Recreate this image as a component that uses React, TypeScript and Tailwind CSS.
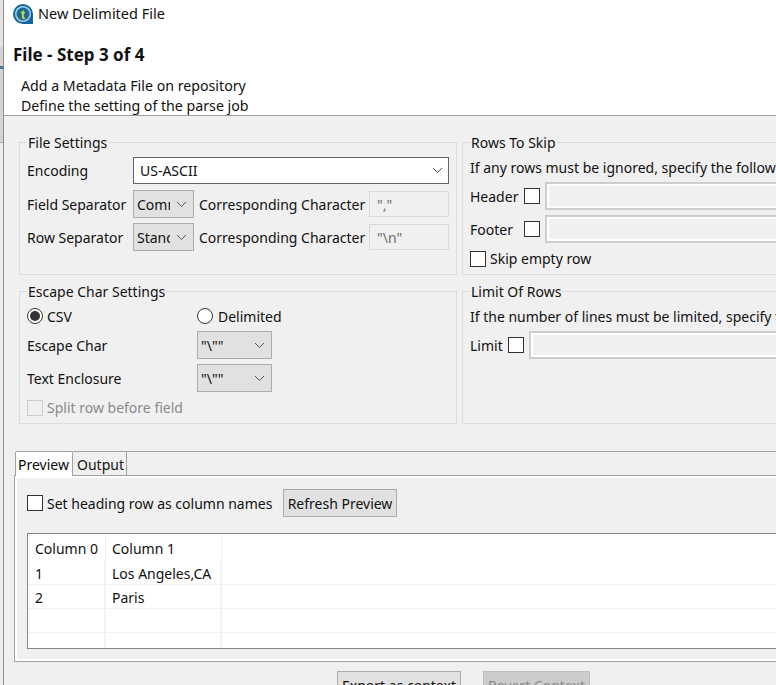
const Chevron = ({ color = "#555" }: { color?: string }) => (
  <svg width="11" height="7" viewBox="0 0 11 7" fill="none" className="shrink-0">
    <path d="M1 1l4.5 4.5L10 1" stroke={color} strokeWidth="1" />
  </svg>
);

const Combo = ({ text, w, textW }: { text: string; w: string; textW: string }) => (
  <div className={`${w} h-[28px] shrink-0 flex items-center bg-[#e1e1e1] border border-[#adadad] pl-[3px]`}>
    <span className={`${textW} overflow-hidden whitespace-nowrap`}>{text}</span>
    <span className="ml-auto mr-[6px] flex"><Chevron /></span>
  </div>
);

const Check = ({ disabled = false }: { disabled?: boolean }) => (
  <span className={`block w-[16px] h-[16px] shrink-0 border ${disabled ? "border-[#cccccc] bg-[#f0f0f0]" : "border-[#333333] bg-white"}`} />
);

const Radio = ({ on = false }: { on?: boolean }) => (
  <span className="flex items-center justify-center w-[16px] h-[16px] shrink-0 rounded-full border border-[#333333] bg-white">
    {on && <span className="block w-[10px] h-[10px] rounded-full bg-[#333333]" />}
  </span>
);

const Group = ({ title, className, children }: { title: string; className: string; children: React.ReactNode }) => (
  <fieldset className={`${className} h-[143px] pl-[7px] border border-[#dcdcdc] shrink-0`}>
    <legend className="px-[1px] h-[20px] pt-[2px] leading-[18px]">{title}</legend>
    {children}
  </fieldset>
);

const ReadBox = ({ text }: { text: string }) => (
  <div className="w-[80px] h-[26px] border border-[#d9d9d9] flex items-center pl-[7px] text-[#6d6d6d] bg-[#f0f0f0]">{text}</div>
);

const WideBox = () => (
  <div className="flex-1 h-[28px] border-2 border-[#cdcdcd]">
    <div className="h-full border-2 border-white bg-[#f0f0f0]" />
  </div>
);

const cols = ["w-[78px]", "w-[116px]"];

export default function App() {
  return (
    <div className="w-[776px] h-[685px] overflow-hidden flex bg-white text-[14px] text-[#111] font-['Noto_Sans',sans-serif]">
      <div className="w-[3px] shrink-0 flex flex-col">
        <div className="h-[46px] bg-[#e4e4e4]" />
        <div className="h-[20px] bg-[#d4d4d4]" />
        <div className="h-[3px] bg-[#3f73a8]" />
        <div className="h-[73px] bg-[#d4d4d4]" />
        <div className="flex-1 bg-[#eeeeee] border-t border-[#aaaaaa]" />
      </div>
      <div className="w-[773px] shrink-0 flex flex-col border-l border-[#8f8f8f]">
        <header className="h-[116px] shrink-0 bg-white border-b border-[#a0a0a0] flex flex-col">
          <div className="flex items-center h-[27px] pl-[9px] pt-[1px] text-[14.5px]">
            <svg width="20" height="20" viewBox="0 0 20 20" className="shrink-0">
              <rect x="9" y="10" width="11" height="10" fill="#14649f" />
              <circle cx="10" cy="10" r="10" fill="#14649f" />
              <circle cx="10" cy="10" r="8" fill="#9fd0e4" />
              <circle cx="10" cy="10" r="6.5" fill="#1a6a93" />
              <text x="10" y="14.5" fontSize="13" fontWeight="700" textAnchor="middle" fill="#d8dc3e" fontFamily="'Liberation Sans',sans-serif">t</text>
            </svg>
            <span className="ml-[5px]">New Delimited File</span>
          </div>
          <div className="mt-[16px] pl-[9px] text-[17px] font-bold leading-[24px]">File - Step 3 of 4</div>
          <div className="mt-[9px] pl-[17px] leading-[20px] text-[14.2px]">Add a Metadata File on repository</div>
          <div className="pl-[17px] h-[18px] leading-[20px] text-[14.2px]">Define the setting of the parse job</div>
        </header>

        <main className="flex-1 bg-[#f0f0f0] flex flex-col pt-[16px] min-h-0">
          <div className="flex shrink-0 pl-[15px] gap-[5px]">
            <Group title="File Settings" className="w-[438px]">
              <div className="flex items-center h-[27px] mt-[5px]">
                <span className="w-[106px]">Encoding</span>
                <div className="w-[316px] h-[27px] bg-white border border-[#666666] flex items-center pl-[6px]">
                  US-ASCII
                  <span className="ml-auto mr-[5px] flex"><Chevron /></span>
                </div>
              </div>
              <div className="flex items-center mt-[6px]">
                <span className="w-[106px] whitespace-nowrap">Field Separator</span>
                <Combo text="Comma" w="w-[61px]" textW="w-[33px]" />
                <span className="ml-[5px] w-[170px] whitespace-nowrap">Corresponding Character</span>
                <ReadBox text={'","'} />
              </div>
              <div className="flex items-center mt-[5px]">
                <span className="w-[106px] whitespace-nowrap">Row Separator</span>
                <Combo text="Standard" w="w-[61px]" textW="w-[33px]" />
                <span className="ml-[5px] w-[170px] whitespace-nowrap">Corresponding Character</span>
                <ReadBox text={'"\\n"'} />
              </div>
            </Group>
            <Group title="Rows To Skip" className="w-[420px]">
              <div className="whitespace-nowrap leading-[20px] mt-[6px]">If any rows must be ignored, specify the following</div>
              <div className="flex items-center mt-[4px]">
                <span className="w-[54px]">Header</span>
                <Check />
                <span className="w-[5px]" />
                <WideBox />
              </div>
              <div className="flex items-center mt-[5px]">
                <span className="w-[54px]">Footer</span>
                <Check />
                <span className="w-[5px]" />
                <WideBox />
              </div>
              <div className="flex items-center gap-[4px] mt-[6px] leading-[20px]">
                <Check />
                <span>Skip empty row</span>
              </div>
            </Group>
          </div>

          <div className="flex shrink-0 pl-[15px] gap-[5px] mt-[6px]">
            <Group title="Escape Char Settings" className="w-[438px]">
              <div className="flex items-center h-[20px] mt-[5px]">
                <div className="w-[170px] flex items-center gap-[4px]"><Radio on /><span>CSV</span></div>
                <div className="flex items-center gap-[5px]"><Radio /><span>Delimited</span></div>
              </div>
              <div className="flex items-center mt-[5px]">
                <span className="w-[170px]">Escape Char</span>
                <Combo text={'"\\""'} w="w-[75px]" textW="w-[40px]" />
              </div>
              <div className="flex items-center mt-[5px]">
                <span className="w-[170px]">Text Enclosure</span>
                <Combo text={'"\\""'} w="w-[75px]" textW="w-[40px]" />
              </div>
              <div className="flex items-center gap-[4px] mt-[5px] text-[#8a8a8a] leading-[20px]">
                <Check disabled />
                <span className="pt-[1px]">Split row before field</span>
              </div>
            </Group>
            <Group title="Limit Of Rows" className="w-[420px]">
              <div className="whitespace-nowrap leading-[20px] mt-[6px]">If the number of lines must be limited, specify the</div>
              <div className="flex items-center mt-[4px]">
                <span className="w-[38px]">Limit</span>
                <Check />
                <span className="w-[5px]" />
                <WideBox />
              </div>
            </Group>
          </div>

          <section className="mt-[27px] ml-[10px] w-[800px] shrink-0">
            <div className="flex h-[25px] pl-[1px] border-b border-[#a0a0a0]">
              <div className="w-[58px] h-[25px] bg-white border border-b-0 border-[#a0a0a0] rounded-t-[2px] pl-[2px] leading-[26px] text-[#0a0a0a] z-10">Preview</div>
              <div className="w-[54px] h-[24px] border-r border-t border-[#a0a0a0] pl-[4px] leading-[26px]">Output</div>
              <div className="flex-1 border-t border-[#a0a0a0]" />
            </div>
            <div className="h-[186px] border-l border-b border-[#a0a0a0]">
              <div className="h-full border-2 border-white bg-[#f0f0f0] pt-[11px] pl-[10px]">
                <div className="flex items-center h-[28px]">
                  <Check />
                  <span className="ml-[4px] w-[236px] whitespace-nowrap">Set heading row as column names</span>
                  <div className="w-[114px] h-[28px] bg-[#e1e1e1] border border-[#adadad] flex items-center justify-center">Refresh Preview</div>
                </div>
                <div className="mt-[16px] h-[116px] bg-white border border-[#828790] overflow-hidden">
                  <div className="flex h-[27px]">
                    <div className="w-[78px] pl-[7px] leading-[29px] border-r border-[#f0f0f0] whitespace-nowrap">Column 0</div>
                    <div className="w-[116px] pl-[6px] leading-[29px] border-r border-[#f0f0f0] whitespace-nowrap">Column 1</div>
                  </div>
                  {["1|Los Angeles,CA", "2|Paris", "|", "|"].map((row, i) => {
                    const [a, b] = row.split("|");
                    return (
                      <div key={i} className="flex h-[24px] border-b border-[#f0f0f0] leading-[25px]">
                        <div className={`${cols[0]} pl-[7px] border-r-2 border-[#f0f3f8]`}>{a}</div>
                        <div className={`${cols[1]} pl-[6px] border-r-2 border-[#eef2f9] whitespace-nowrap`}>{b}</div>
                      </div>
                    );
                  })}
                </div>
              </div>
            </div>
          </section>

          <div className="flex shrink-0 mt-[9px] pl-[333px] gap-[22px]">
            <div className="w-[124px] h-[28px] shrink-0 bg-[#e1e1e1] border border-[#adadad] flex items-center justify-center">Export as context</div>
            <div className="w-[107px] h-[28px] shrink-0 bg-[#cccccc] border border-[#bfbfbf] flex items-center justify-center text-[#8a8a8a]">Revert Context</div>
          </div>
        </main>
      </div>
    </div>
  );
}
